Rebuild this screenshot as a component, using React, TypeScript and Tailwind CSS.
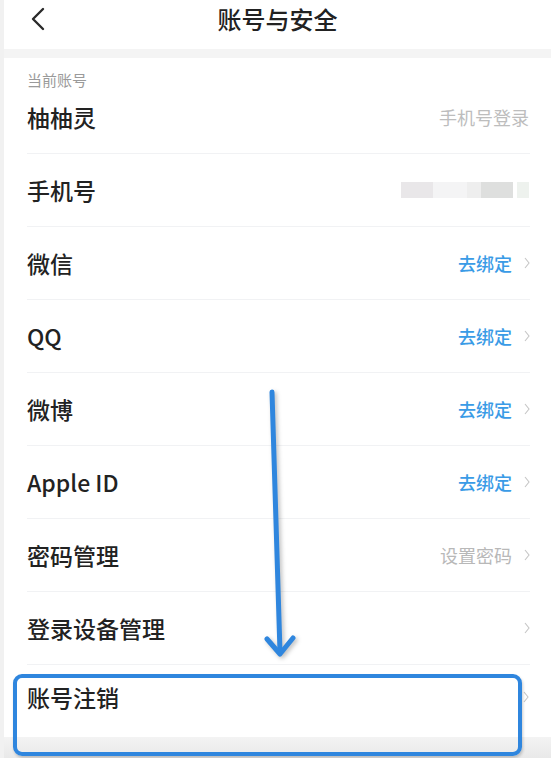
import React from 'react';

type Row = {
  label: string;
  value?: string;
  tone?: 'blue' | 'gray';
  mosaic?: boolean;
  chevron?: boolean;
};

const rows: Row[] = [
  { label: '手机号', mosaic: true },
  { label: '微信', value: '去绑定', tone: 'blue', chevron: true },
  { label: 'QQ', value: '去绑定', tone: 'blue', chevron: true },
  { label: '微博', value: '去绑定', tone: 'blue', chevron: true },
  { label: 'Apple ID', value: '去绑定', tone: 'blue', chevron: true },
  { label: '密码管理', value: '设置密码', tone: 'gray', chevron: true },
  { label: '登录设备管理', chevron: true },
];

const font = { fontFamily: '"Noto Sans CJK SC", "Noto Sans", sans-serif' };

function Chevron() {
  return (
    <svg width="6" height="12" viewBox="0 0 6 12" className="shrink-0">
      <polyline points="1,1 5,6 1,11" fill="none" stroke="#c6c6c6" strokeWidth="1.1" />
    </svg>
  );
}

function Mosaic() {
  return (
    <div className="flex h-[16px] mr-[1px]">
      <div className="w-[32px] bg-[#e9e7e9]" />
      <div className="w-[34px] bg-[#f4f4f5]" />
      <div className="w-[14px] bg-[#eeeeee]" />
      <div className="w-[32px] bg-[#dedfde]" />
      <div className="w-[4px] bg-white" />
      <div className="w-[12px] bg-[#eef2ee]" />
    </div>
  );
}

function ListRow({ row }: { row: Row }) {
  return (
    <div className="flex h-[73px] items-center justify-between border-b border-[#f1f2f4]">
      <span className="text-[23px] leading-[32px] font-medium text-[#222]">{row.label}</span>
      <div className="flex items-center gap-[12px]">
        {row.mosaic && <Mosaic />}
        {row.value && (
          <span
            className={`text-[18px] leading-[24px] ${row.tone === 'blue' ? 'text-[#3a9be6] font-medium' : 'text-[#b8b8b8]'}`}
          >
            {row.value}
          </span>
        )}
        {row.chevron && <Chevron />}
      </div>
    </div>
  );
}

export default function App() {
  return (
    <div className="relative w-[551px] h-[758px] overflow-hidden bg-[#f1f1f1]" style={font}>
      <div className="ml-[4px] flex h-full flex-col">
        {/* header */}
        <div className="relative flex h-[49px] justify-center bg-white">
          <svg width="16" height="24" viewBox="0 0 16 24" className="absolute left-[26px] top-[7px]">
            <polyline points="13,2 3,12 13,22" fill="none" stroke="#2a2a2a" strokeWidth="2.4" strokeLinecap="round" strokeLinejoin="round" />
          </svg>
          <span className="text-[24px] leading-[38px] font-medium text-[#222]">账号与安全</span>
        </div>
        <div className="h-[9px] bg-[#f4f4f4]" />

        <div className="flex flex-1 flex-col bg-white pl-[23px] pr-[21px]">
          <div className="flex h-[96px] flex-col border-b border-[#f1f2f4] pt-[12px]">
            <span className="text-[15px] leading-[20px] text-[#9a9a9a]">当前账号</span>
            <div className="mt-[11px] flex items-center justify-between">
              <span className="text-[23px] leading-[32px] font-medium text-[#222]">柚柚灵</span>
              <span className="mr-[1px] text-[18px] leading-[24px] text-[#bdbdbd]">手机号登录</span>
            </div>
          </div>
          {rows.map((r) => (
            <ListRow key={r.label} row={r} />
          ))}
          <div className="flex h-[63px] items-center justify-between">
            <span className="text-[23px] leading-[32px] font-medium text-[#222]">账号注销</span>
            <div className="mr-[1px]">
              <Chevron />
            </div>
          </div>
        </div>
        <div className="h-[21px] bg-gradient-to-b from-[#f3f3f3] to-[#e9e9e9]" />
      </div>

      {/* annotation: arrow + highlight box */}
      <svg width="551" height="758" className="pointer-events-none absolute left-0 top-0 drop-shadow-[2px_2px_2px_rgba(0,0,0,0.25)]">
        <g stroke="#2f86de" strokeWidth="5" strokeLinecap="round" strokeLinejoin="round" fill="none">
          <line x1="272" y1="392" x2="280" y2="652" />
          <polyline points="267,639 280,654 293,638" />
        </g>
      </svg>
      <div className="pointer-events-none absolute left-[13px] top-[674px] h-[82px] w-[509px] rounded-[9px] border-[4px] border-[#2f86de] shadow-[1px_2px_3px_rgba(0,0,0,0.2)]" />
    </div>
  );
}
